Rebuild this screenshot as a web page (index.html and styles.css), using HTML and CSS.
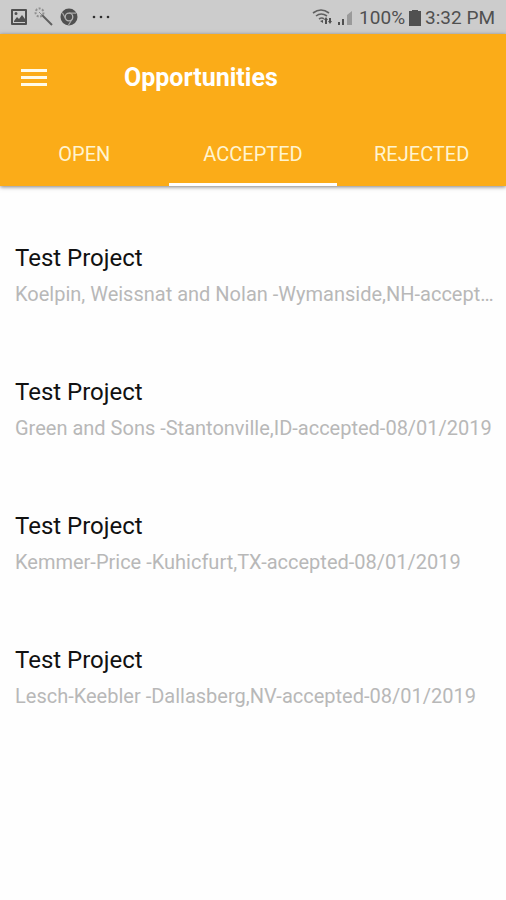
FILE: index.html
```html
<!DOCTYPE html>
<html lang="en">
<head>
<meta charset="utf-8">
<meta name="viewport" content="width=device-width, initial-scale=1">
<title>Opportunities</title>
<link rel="stylesheet" href="styles.css">
</head>
<body>
<div class="status">
  <div class="status-group status-left">
    <svg width="18" height="18" viewBox="0 0 18 18" aria-hidden="true"><path fill="#505050" fill-rule="evenodd" d="M2 1h14a1 1 0 0 1 1 1v14a1 1 0 0 1-1 1H2a1 1 0 0 1-1-1V2a1 1 0 0 1 1-1zm1 2v12h12V3zm1 10 3-4 2 2 3-4 3 4v3H4zM6 4a1.500 1.500 0 1 1 0 3 1.500 1.500 0 0 1 0-3z"/></svg>
    <svg width="20" height="20" viewBox="0 0 20 20" aria-hidden="true"><path d="m8 8 10 10" stroke="#606060" stroke-width="2"/><circle cx="5.500" cy="5.500" r="4" fill="none" stroke="#909090" stroke-width="2" stroke-dasharray="2 1.500"/><path d="m5 5 3 3" stroke="#888" stroke-width="1"/></svg>
    <svg width="18" height="18" viewBox="0 0 18 18" aria-hidden="true"><circle cx="9" cy="9" r="8.500" fill="#505050"/><circle cx="9" cy="9" r="3.800" fill="none" stroke="#b8b8b8" stroke-width="1.300"/><path d="M9 5.200h7M5.800 11 2.400 4.800M12.200 11 8.500 17" stroke="#a8a8a8" stroke-width="1.200"/></svg>
    <svg class="more" width="20" height="18" viewBox="0 0 20 18" aria-hidden="true"><g fill="#303030"><circle cx="2" cy="9" r="1.300"/><circle cx="9" cy="9" r="1.300"/><circle cx="16" cy="9" r="1.300"/></g></svg>
  </div>
  <div class="status-group status-right">
    <svg width="44" height="20" viewBox="0 0 44 20" aria-hidden="true"><g fill="none" stroke="#606060" stroke-width="1.600"><path d="M2 5q8-6 16 0M5 8q5-4 11 0M8 11q3-2 5 0"/></g><path fill="#505050" d="m9 13 3-1 0 3zM15 9l2 3h-1v4h-2v-4h-1zm4 7-2-3h1v-3h2v3h1zM27 14h2v3h-2zm4-3h2v6h-2z"/><path fill="#9a9a9a" d="m36 7 5-4v14h-5z"/></svg>
    <span>100%</span>
    <svg width="12" height="18" viewBox="0 0 12 18" aria-hidden="true"><path fill="#505050" d="M3 1h6v1h3v15H0V2h3z"/></svg>
    <span>3:32 PM</span>
  </div>
</div>
<header class="header">
  <div class="toolbar">
    <button class="menu" type="button" aria-label="Menu"><svg width="26" height="18" viewBox="0 0 26 18" aria-hidden="true"><path fill="#fffbe8" d="M0 0h26v3H0zM0 7h26v3H0zM0 14h26v3H0z"/></svg></button>
    <h1>Opportunities</h1>
  </div>
  <nav class="tabs">
    <a href="#open">OPEN</a>
    <a href="#accepted" class="active" aria-current="page">ACCEPTED</a>
    <a href="#rejected">REJECTED</a>
  </nav>
</header>
<main>
  <ul class="list">
    <li><h2>Test Project</h2><p>Koelpin, Weissnat and Nolan -Wymanside,NH-accepted-08/01/2019</p></li>
    <li><h2>Test Project</h2><p>Green and Sons -Stantonville,ID-accepted-08/01/2019</p></li>
    <li><h2>Test Project</h2><p>Kemmer-Price -Kuhicfurt,TX-accepted-08/01/2019</p></li>
    <li><h2>Test Project</h2><p>Lesch-Keebler -Dallasberg,NV-accepted-08/01/2019</p></li>
  </ul>
</main>
</body>
</html>
```
FILE: styles.css
```css
* { box-sizing: border-box; }
body { margin: 0; background: #fefefe; font-family: Roboto, sans-serif; color: #111; }
h1, h2, p, ul { margin: 0; padding: 0; font-weight: 400; }
svg { display: block; flex: none; }
.status { display: flex; justify-content: space-between; align-items: center; height: 34px; padding: 0 11px 0 10px; background: #cccccc; color: #505050; font-size: 19px; line-height: 24px; }
.status-group { display: flex; align-items: center; }
.status-left { gap: 6px; }
.more { margin-left: 8px; }
.status-right { gap: 4px; padding-top: 2px; }
.header { background: #fbac18; color: #fff; box-shadow: 0 1px 4px rgba(0, 0, 0, 0.5); }
.toolbar { display: flex; align-items: center; gap: 77px; height: 88px; padding: 0 21px; }
.menu { padding: 0; border: 0; background: none; cursor: pointer; }
h1 { font-size: 25px; line-height: 32px; font-weight: 700; }
.tabs { display: grid; grid-template-columns: repeat(3, 1fr); height: 64px; }
.tabs a { display: flex; align-items: center; justify-content: center; border-top: 3px solid transparent; border-bottom: 3px solid transparent; color: #fff4d0; font-size: 20px; text-decoration: none; }
.tabs .active { border-bottom-color: #fff; }
.list { list-style: none; padding-top: 22px; }
.list li { display: flex; flex-direction: column; justify-content: center; gap: 6px; height: 134px; padding: 0 12px 0 15px; }
h2 { font-size: 24px; line-height: 32px; }
.list p { overflow: hidden; color: #b8b8b8; font-size: 20px; line-height: 28px; text-overflow: ellipsis; white-space: nowrap; }
```
